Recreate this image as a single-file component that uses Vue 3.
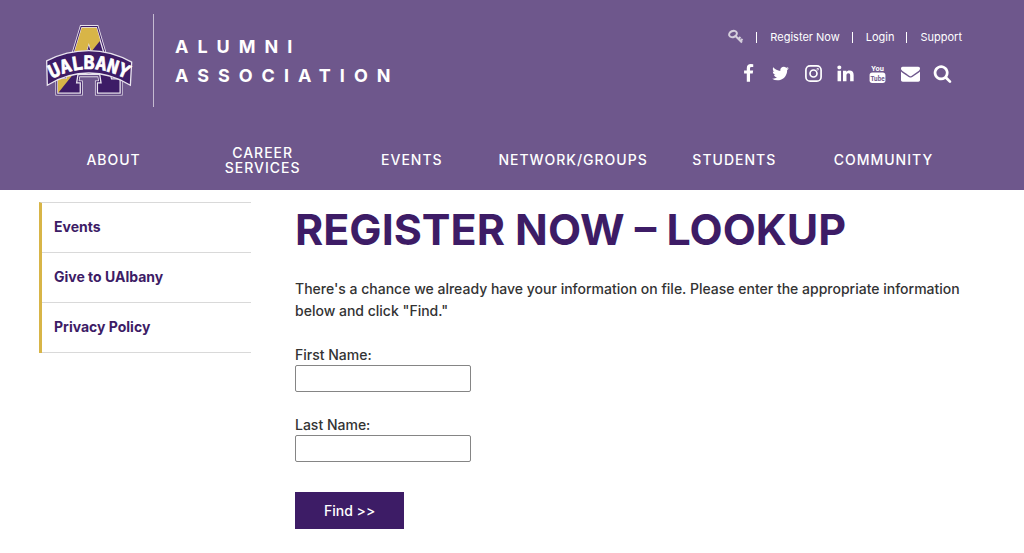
<template>
  <div class="page">
    <header class="site-header">
      <div class="header-top">
        <a href="#" class="brand" aria-label="UAlbany Alumni Association">
          <svg class="logo" viewBox="30 42 264 218" aria-hidden="true">
            <defs>
              <clipPath id="a-shape">
                <path :d="letterA" clip-rule="evenodd" />
              </clipPath>
            </defs>
            <path :d="letterA" fill="none" stroke="#e9e4ee" stroke-width="15" />
            <path :d="letterA" fill="none" stroke="#3d1c66" stroke-width="10" />
            <path :d="letterA" fill="#3d1c66" stroke="#e9e4ee" stroke-width="4" fill-rule="evenodd" />
            <path d="M40 40H235L60 258H40Z" fill="#d8b547" clip-path="url(#a-shape)" />
            <path
              d="M32 152Q92 121 160 121T290 156L286 226Q225 189 160 189T34 226Z"
              fill="#3d1c66"
              stroke="#e9e4ee"
              stroke-width="4"
            />
            <path id="arch" d="M38 212Q100 177 160 177T284 212" fill="none" />
            <text class="logo-text">
              <textPath href="#arch" startOffset="50%" text-anchor="middle">UALBANY</textPath>
            </text>
          </svg>
          <span class="brand-name">Alumni<br />Association</span>
        </a>

        <div class="tools">
          <ul class="links">
            <li>
              <a href="#" aria-label="Member access">
                <svg class="key" viewBox="0 0 16 16" aria-hidden="true">
                  <ellipse cx="5" cy="5" rx="4" ry="3" transform="rotate(-25 5 5)" />
                  <path d="M7.500 7L14 13.500M10 10.500L12.500 8M12 12.500L14.500 10" />
                </svg>
              </a>
            </li>
            <li v-for="link in links" :key="link"><a href="#">{{ link }}</a></li>
          </ul>
          <div class="social">
            <a v-for="icon in icons" :key="icon.name" href="#" :aria-label="icon.name">
              <svg v-if="icon.path" viewBox="0 0 1792 1792"><path :d="icon.path" /></svg>
              <svg v-else-if="icon.name === 'Instagram'" viewBox="0 0 18 18" class="outline">
                <rect x="1.800" y="1.800" width="14.400" height="14.400" rx="4" />
                <circle cx="9" cy="9" r="3.300" />
                <circle cx="13" cy="5" r="0.300" />
              </svg>
              <svg v-else viewBox="0 0 18 18" class="youtube">
                <text x="9" y="7" text-anchor="middle">You</text>
                <rect x="1.500" y="8" width="15" height="10" rx="2.500" />
                <text x="9" y="16" text-anchor="middle" class="tube">Tube</text>
              </svg>
            </a>
          </div>
        </div>
      </div>

      <nav class="main-nav">
        <a v-for="item in menu" :key="item" href="#"><span>{{ item }}</span></a>
      </nav>
    </header>

    <div class="content">
      <aside>
        <ul class="side-nav">
          <li v-for="item in sideMenu" :key="item"><a href="#">{{ item }}</a></li>
        </ul>
      </aside>

      <main>
        <h1>Register Now – Lookup</h1>
        <p>
          There's a chance we already have your information on file. Please enter the appropriate
          information below and click "Find."
        </p>
        <form @submit.prevent>
          <div class="field">
            <label for="first-name">First Name:</label>
            <input id="first-name" v-model="firstName" type="text" />
          </div>
          <div class="field">
            <label for="last-name">Last Name:</label>
            <input id="last-name" v-model="lastName" type="text" />
          </div>
          <button type="submit">Find &gt;&gt;</button>
        </form>
      </main>
    </div>
  </div>
</template>

<script setup>
import { ref } from 'vue';

const firstName = ref('');
const lastName = ref('');

const links = ['Register Now', 'Login', 'Support'];
const menu = ['About', 'Career Services', 'Events', 'Network/Groups', 'Students', 'Community'];
const sideMenu = ['Events', 'Give to UAlbany', 'Privacy Policy'];

const letterA =
  'M139 51H183L229 207H255V250H186V219H197L193 194H127L123 219H134V250H66V207H92ZM160 98L145 150H175Z';

const icons = [
  {
    name: 'Facebook',
    path: 'M1343 12v264h-157q-86 0-116 36t-30 108v189h293l-39 296h-254v759h-306v-759h-255v-296h255v-218q0-186 104-288.500t277-102.500q147 0 228 12z'
  },
  {
    name: 'Twitter',
    path: 'M1684 408q-67 98-162 167 1 14 1 42 0 130-38 259.500t-115.500 248.500-184.500 210.500-258 146-323 54.500q-271 0-496-145 35 4 78 4 225 0 401-138-105-2-188-64.500t-114-159.500q33 5 61 5 43 0 85-11-112-23-185.500-111.500t-73.500-205.500v-4q68 38 146 41-66-44-105-115t-39-154q0-88 44-163 121 149 294.500 238.500t371.500 99.500q-8-38-8-74 0-134 94.500-228.500t228.500-94.500q140 0 236 102 109-21 205-78-37 115-142 178 93-10 186-50z'
  },
  { name: 'Instagram' },
  {
    name: 'LinkedIn',
    path: 'M477 625v991h-330v-991h330zm21-306q1 73-50.500 122t-135.500 49h-2q-82 0-132-49t-50-122q0-74 51.500-122.500t134.500-48.500 133 48.500 51 122.500zm1166 729v568h-329v-530q0-105-40.500-164.500t-126.500-59.500q-63 0-105.500 34.500t-63.500 85.500q-11 30-11 81v553h-329q2-399 2-647t-1-296l-1-48h329v144h-2q20-32 41-56t56.500-52 87-43.500 114.500-15.500q171 0 275 113.500t104 332.500z'
  },
  { name: 'YouTube' },
  {
    name: 'Email',
    path: 'M1792 710v794q0 66-47 113t-113 47h-1472q-66 0-113-47t-47-113v-794q44 49 101 87 362 246 497 345 57 42 92.500 65.500t94.500 48 110 24.500h2q51 0 110-24.500t94.500-48 92.500-65.500q170-123 498-345 57-39 100-87zm0-294q0 79-49 151t-122 123q-376 261-468 325-10 7-42.500 31t-54 38.500-52 32.500-57.500 27-50 9h-2q-23 0-50-9t-57.500-27-52-32.500-54-38.500-42.500-31q-91-64-262-182.500t-205-142.500q-62-42-117-115.500t-55-136.500q0-78 41.500-130t118.500-52h1472q65 0 112.500 47t47.500 113z'
  },
  {
    name: 'Search',
    path: 'M1216 832q0-185-131.500-316.500t-316.500-131.500-316.500 131.500-131.500 316.500 131.500 316.500 316.500 131.500 316.500-131.500 131.500-316.500zm512 832q0 52-38 90t-90 38q-54 0-90-38l-343-342q-179 124-399 124-143 0-273.500-55.500t-225-150-150-225-55.500-273.500 55.500-273.500 150-225 225-150 273.500-55.500 273.500 55.500 225 150 150 225 55.500 273.500q0 220-124 399l343 343q37 37 37 90z'
  }
];
</script>

<style>
body {
  background: #fff;
}
</style>

<style scoped>
.page {
  font-family: Inter, "Liberation Sans", sans-serif;
  font-size: 14px;
  font-weight: 500;
  line-height: 22px;
  color: #333;
}
a {
  color: inherit;
  text-decoration: none;
}
ul {
  list-style: none;
  margin: 0;
  padding: 0;
}
.site-header {
  background: #6e578c;
  color: #fff;
}
.header-top {
  display: flex;
  justify-content: space-between;
  align-items: flex-start;
  padding: 14px 62px 0 46px;
}
.brand {
  display: flex;
  align-items: center;
}
.logo {
  width: 87px;
  height: 73px;
  margin-right: 20px;
}
.logo-text {
  font: bold 56px "DejaVu Sans Mono", monospace;
  fill: #fff;
  stroke: #fff;
  stroke-width: 2;
}
.brand-name {
  border-left: 1px solid #c5bbd1;
  padding: 18px 0 17px 21px;
  font-size: 18px;
  line-height: 29px;
  font-weight: 700;
  letter-spacing: 9px;
  text-transform: uppercase;
}
.tools {
  display: flex;
  flex-direction: column;
  align-items: flex-end;
  padding-top: 12px;
}
.links {
  display: flex;
  font-size: 11px;
  font-weight: 400;
}
.links li {
  display: flex;
  align-items: center;
}
.links li + li::before {
  content: "";
  width: 1px;
  height: 11px;
  margin: 0 13px 0 12px;
  background: #fff;
}
.key {
  display: block;
  width: 16px;
  height: 16px;
  fill: none;
  stroke: #d5cfdc;
  stroke-width: 2;
}
.social {
  display: flex;
  justify-content: space-between;
  width: 213px;
  margin: 16px 10px 0 0;
}
.social svg {
  display: block;
  width: 19px;
  height: 19px;
  fill: #fff;
}
.social .outline {
  fill: none;
  stroke: #fff;
  stroke-width: 1.6;
}
.youtube text {
  font: bold 7px Roboto, "Liberation Sans", sans-serif;
}
.youtube .tube {
  font-size: 6px;
  fill: #6e578c;
}
.main-nav {
  display: flex;
  padding: 22px 66px 0 39px;
  height: 61px;
}
.main-nav a {
  flex: 1 1 0;
  display: flex;
  align-items: center;
  justify-content: center;
  padding: 0 12px;
  font-size: 14px;
  line-height: 15px;
  letter-spacing: 1px;
  text-align: center;
  text-transform: uppercase;
}
.content {
  display: flex;
  gap: 44px;
  padding: 12px 62px 24px 39px;
}
aside {
  flex: 0 0 212px;
}
.side-nav {
  border-left: 3px solid #d8b547;
  border-top: 1px solid #d9d9d9;
}
.side-nav a {
  display: block;
  padding: 13px 12px 14px;
  border-bottom: 1px solid #d9d9d9;
  color: #3d1c66;
  font-size: 14px;
  font-weight: 700;
}
main {
  flex: 1;
  min-width: 0;
}
h1 {
  margin: 0 0 22px;
  font-size: 43px;
  line-height: 54px;
  font-weight: 700;
  color: #3d1c66;
  text-transform: uppercase;
}
p {
  margin: 0 0 22px;
}
.field {
  display: flex;
  flex-direction: column;
  align-items: flex-start;
  margin-bottom: 22px;
}
.field label {
  line-height: 21px;
}
.field input {
  box-sizing: border-box;
  width: 176px;
  height: 27px;
  padding: 2px 6px;
  border: 1px solid #858585;
  border-radius: 2px;
  font: inherit;
}
button {
  margin-top: 8px;
  padding: 8px 29px 7px;
  border: 0;
  background: #3d1c66;
  color: #fff;
  font: inherit;
}
</style>
